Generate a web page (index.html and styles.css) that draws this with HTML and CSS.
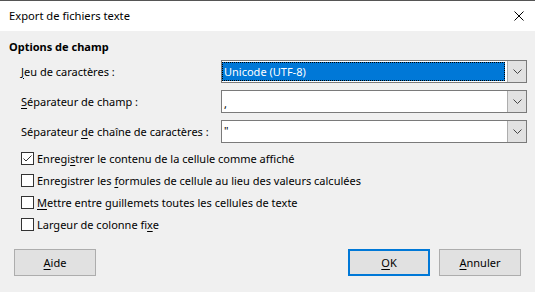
FILE: index.html
```html
<!DOCTYPE html>
<html lang="fr">
<head>
<meta charset="utf-8">
<title>Export de fichiers texte</title>
<link rel="stylesheet" href="styles.css">
</head>
<body>
<div class="window">
  <div class="topline"></div>
  <div class="titlebar">
    <span class="title">Export de fichiers texte</span>
    <svg class="close" width="10" height="10" viewBox="0 0 10 10"><path d="M0.5 0.5 L9.5 9.5 M9.5 0.5 L0.5 9.5" stroke="#000" stroke-width="1" fill="none"/></svg>
  </div>
  <div class="content">
    <div class="section-title">Options de champ</div>
    <div class="fields">
      <div class="field">
        <label class="label"><u>J</u>eu de caractères :</label>
        <div class="select">
          <div class="value selected"><span>Unicode (UTF-8)</span></div>
          <div class="arrow"><svg width="9" height="5" viewBox="0 0 9 5"><path d="M0.5 0.5 L4.5 4.5 L8.5 0.5" stroke="#444" fill="none"/></svg></div>
        </div>
      </div>
      <div class="field">
        <label class="label"><u>S</u>éparateur de champ :</label>
        <div class="select">
          <div class="value"><span class="comma">,</span></div>
          <div class="arrow"><svg width="9" height="5" viewBox="0 0 9 5"><path d="M0.5 0.5 L4.5 4.5 L8.5 0.5" stroke="#444" fill="none"/></svg></div>
        </div>
      </div>
      <div class="field">
        <label class="label">Séparateur <u>d</u>e chaîne de caractères :</label>
        <div class="select">
          <div class="value"><span class="quote">"</span></div>
          <div class="arrow"><svg width="9" height="5" viewBox="0 0 9 5"><path d="M0.5 0.5 L4.5 4.5 L8.5 0.5" stroke="#444" fill="none"/></svg></div>
        </div>
      </div>
    </div>
    <div class="checks">
      <div class="check">
        <span class="box"><svg width="11" height="11" viewBox="0 0 11 11"><path d="M1.5 5.5 L4 8 L9.5 2.5" stroke="#333" stroke-width="1" fill="none"/></svg></span>
        <span>Enregi<u>s</u>trer le contenu de la cellule comme affiché</span>
      </div>
      <div class="check">
        <span class="box"></span>
        <span>Enregistrer les <u>f</u>ormules de cellule au lieu des valeurs calculées</span>
      </div>
      <div class="check">
        <span class="box"></span>
        <span><u>M</u>ettre entre guillemets toutes les cellules de texte</span>
      </div>
      <div class="check">
        <span class="box"></span>
        <span>Largeur de colonne fi<u>x</u>e</span>
      </div>
    </div>
    <div class="buttons">
      <button class="btn"><u>A</u>ide</button>
      <div class="spacer"></div>
      <button class="btn default"><u>O</u>K</button>
      <button class="btn"><u>A</u>nnuler</button>
    </div>
  </div>
</div>
</body>
</html>
```

FILE: styles.css
```css
* { box-sizing: border-box; }
html, body { margin: 0; padding: 0; }
body {
  width: 535px;
  height: 292px;
  overflow: hidden;
  background: #f0f0f0;
  font-family: "Noto Sans", "Open Sans", sans-serif;
  font-size: 11px;
  color: #000;
}
u { text-decoration: underline; text-underline-offset: 2px; }
.window { width: 535px; height: 292px; display: flex; flex-direction: column; }
.topline { height: 1px; background: #555; }
.titlebar {
  height: 30px;
  background: #fff;
  display: flex;
  align-items: center;
  padding-left: 9px;
  padding-right: 11px;
}
.title { flex: 1; line-height: 16px; font-size: 11.2px; }
.close { display: block; }
.content {
  flex: 1;
  padding: 8px 14px 0 9px;
  display: flex;
  flex-direction: column;
}
.section-title { font-weight: bold; line-height: 16px; height: 16px; }
.fields {
  margin-top: 5px;
  padding-left: 12px;
  display: flex;
  flex-direction: column;
  gap: 7px;
}
.field { display: flex; align-items: center; height: 23px; }
.label { width: 200px; line-height: 16px; white-space: nowrap; }
.select {
  width: 306px;
  height: 23px;
  border: 1px solid #7a7a7a;
  background: #fff;
  display: flex;
  margin-right: -8px;
}
.value { flex: 1; display: flex; align-items: center; padding-left: 2px; }
.value.selected {
  margin: 1px 2px 1px 0;
  background: #0078d7;
  color: #fff;
  outline: 1px dotted #000;
  outline-offset: -1px;
  padding-left: 2px;
}
.comma { position: relative; top: 2px; }
.quote { position: relative; top: -1px; }
.arrow {
  width: 19px;
  background: #e1e1e1;
  border-left: 1px solid #adadad;
  display: flex;
  align-items: center;
  justify-content: center;
}
.arrow svg { display: block; }
.checks {
  margin-top: 4px;
  padding-left: 12px;
  display: flex;
  flex-direction: column;
}
.check { height: 22px; display: flex; align-items: center; gap: 3px; white-space: nowrap; }
.box {
  width: 13px;
  height: 13px;
  border: 1px solid #333;
  background: #fff;
  display: flex;
  align-items: center;
  justify-content: center;
}
.box svg { display: block; }
.buttons {
  margin-top: 14px;
  padding-left: 5px;
  display: flex;
  gap: 9px;
}
.spacer { flex: 1; }
.btn {
  width: 82px;
  height: 27px;
  background: #e1e1e1;
  border: 1px solid #adadad;
  font-family: inherit;
  font-size: 11px;
  color: #000;
  padding: 0;
}
.btn.default { border: 2px solid #0078d7; }
```
